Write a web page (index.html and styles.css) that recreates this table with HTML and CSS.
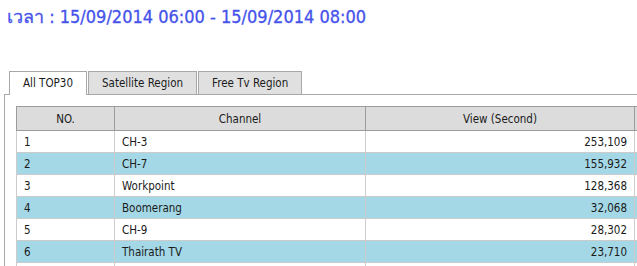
FILE: index.html
```html
<!DOCTYPE html>
<html lang="th">
<head>
<meta charset="utf-8">
<link rel="stylesheet" href="styles.css">
</head>
<body>
<h1 class="title">เวลา : 15/09/2014 06:00 - 15/09/2014 08:00</h1>
<div class="tabs">
  <div class="tablist">
    <div class="tab active">All TOP30</div>
    <div class="tab">Satellite Region</div>
    <div class="tab">Free Tv Region</div>
  </div>
  <div class="panel">
    <table class="grid">
      <thead>
        <tr><th class="c-no">NO.</th><th class="c-ch">Channel</th><th class="c-view">View (Second)</th><th class="c-extra"></th></tr>
      </thead>
      <tbody>
        <tr><td>1</td><td>CH-3</td><td class="num">253,109</td><td></td></tr>
        <tr class="alt"><td>2</td><td>CH-7</td><td class="num">155,932</td><td></td></tr>
        <tr><td>3</td><td>Workpoint</td><td class="num">128,368</td><td></td></tr>
        <tr class="alt"><td>4</td><td>Boomerang</td><td class="num">32,068</td><td></td></tr>
        <tr><td>5</td><td>CH-9</td><td class="num">28,302</td><td></td></tr>
        <tr class="alt"><td>6</td><td>Thairath TV</td><td class="num">23,710</td><td></td></tr>
        <tr><td></td><td></td><td></td><td></td></tr>
      </tbody>
    </table>
  </div>
</div>
</body>
</html>
```
FILE: styles.css
```css
html, body {
  margin: 0;
  padding: 0;
  background: #fff;
  overflow: hidden;
}
body {
  font-family: "DejaVu Sans Condensed", "DejaVu Sans", "Liberation Sans", "Noto Sans", sans-serif;
  color: #1a1a1a;
}
.title {
  margin: 0;
  padding: 6px 0 0 7px;
  height: 71px;
  box-sizing: border-box;
  font-size: 18px;
  font-weight: normal;
  color: #4653ea;
  line-height: 22px;
  -webkit-text-stroke: 0.3px #4653ea;
}
.tabs {
  width: 760px;
}
.tablist {
  display: flex;
  gap: 1px;
  padding-left: 5px;
  margin-left: 4px;
}
.tab {
  height: 22px;
  line-height: 22px;
  padding: 0 13px;
  font-size: 11.5px;
  border: 1px solid #a8a8a8;
  border-bottom: none;
  background: #e0e0e0;
  margin-bottom: -1px;
  position: relative;
}
.tab.active {
  background: #fff;
  height: 23px;
}
.panel {
  margin-left: 4px;
  border-left: 1px solid #a8a8a8;
  border-top: 1px solid #a8a8a8;
  padding: 11px 0 0 11px;
}
.grid {
  border-collapse: collapse;
  font-size: 11.5px;
  table-layout: fixed;
}
.grid th {
  background: #dcdcdc;
  font-weight: normal;
  height: 23px;
  padding: 0;
  border: 1px solid #9c9c9c;
  text-align: center;
}
.grid td {
  height: 21px;
  padding: 0 7px;
  border: 1px solid #cccccc;
}
.grid tr.alt td {
  background: #a4d8e6;
}
.grid .num {
  text-align: right;
}
.c-no { width: 97px; }
.c-ch { width: 250px; }
.c-view { width: 268px; }
.c-extra { width: 100px; }
```
